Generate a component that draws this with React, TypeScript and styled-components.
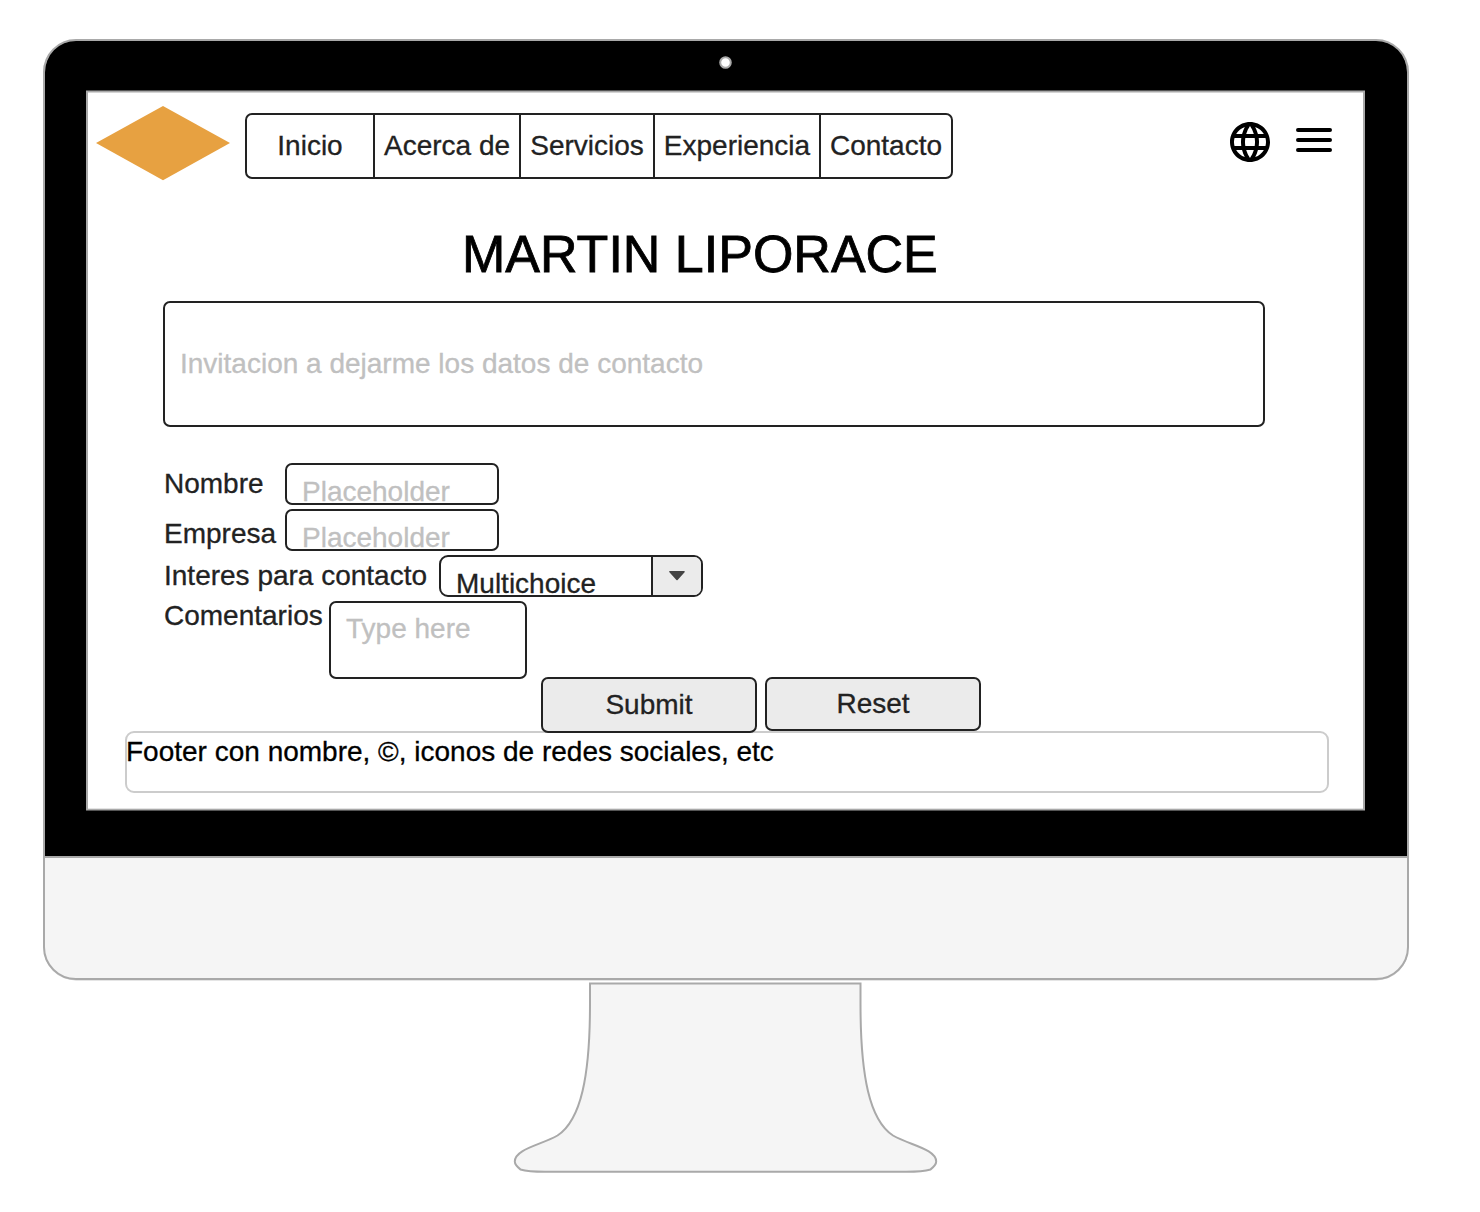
import React from 'react';
import styled, { createGlobalStyle } from 'styled-components';
import { MdLanguage } from 'react-icons/md';

const INK = '#222222';
const EDGE = '#a9a9a9';
const CHROME = '#f5f5f5';

const GlobalStyle = createGlobalStyle`
  * { box-sizing: border-box; }
  body {
    margin: 0;
    background: #ffffff;
    font-family: "Liberation Sans", Arial, Helvetica, sans-serif;
    font-size: 28px;
    line-height: 32px;
    color: ${INK};
    -webkit-text-stroke: 0.3px currentColor;
  }
`;

const Page = styled.div`
  display: flex;
  flex-direction: column;
  width: 1480px;
  height: 1212px;
  padding: 39px 0 0 43px;
  overflow: hidden;
`;

const Monitor = styled.section`
  display: flex;
  flex-direction: column;
  flex: none;
  width: 1366px;
  height: 941px;
  border: 2px solid ${EDGE};
  border-radius: 33px;
  background: ${CHROME};
  box-shadow: 0 1px 0 -0.5px #cccccc;
  overflow: hidden;
`;

const Bezel = styled.div`
  display: flex;
  flex-direction: column;
  align-items: flex-start;
  width: 100%;
  height: 817px;
  padding-left: 41px;
  background: #000000;
  border-bottom: 2px solid ${EDGE};
`;

const CameraBar = styled.div`
  display: flex;
  flex: none;
  height: 50px;
  padding: 15px 0 0 633px;
`;

const Camera = styled.svg`
  display: block;
`;

const Screen = styled.main`
  display: flex;
  flex-direction: column;
  width: 1279px;
  height: 719px;
  background: #ffffff;
  border: 2px solid ${EDGE};
  border-width: 1px 2px;
  box-shadow: 0 -1px 0 #555555, 0 1px 0 #555555, inset 0 1px 0 #d4d4d4, inset 0 -1px 0 #e4e4e4;
`;

const Header = styled.header`
  display: flex;
  align-items: flex-start;
  flex: none;
  height: 128px;
  padding: 14px 25px 0 8px;
`;

const Logo = styled.svg`
  flex: none;
  margin-right: 15px;
`;

const Nav = styled.nav`
  display: flex;
  height: 66px;
  margin-top: 7px;
  border: 2px solid ${INK};
  border-radius: 7px;
`;

const NavItem = styled.a<{ $width: number }>`
  display: flex;
  justify-content: center;
  width: ${(p) => p.$width}px;
  padding-top: 15px;
  white-space: nowrap;
  & + & { border-left: 2px solid ${INK}; }
`;

const Tools = styled.div`
  display: flex;
  gap: 16px;
  margin: 12px 0 0 auto;
  color: #000000;
`;

const MenuIcon = styled.svg`
  margin-top: -2px;
`;

const Title = styled.h1`
  flex: none;
  width: 478px;
  height: 81px;
  margin: 0 0 0 374px;
  padding-top: 4px;
  font-size: 52px;
  line-height: 60px;
  font-weight: 400;
  color: #000000;
  white-space: nowrap;
  -webkit-text-stroke: 0.8px currentColor;
`;

const Field = styled.div<{ $width: number; $height: number; $top: number; $muted?: boolean }>`
  flex: none;
  width: ${(p) => p.$width}px;
  height: ${(p) => p.$height}px;
  padding: ${(p) => p.$top}px 0 0 15px;
  border: 2px solid ${INK};
  border-radius: 7px;
  background: #ffffff;
  color: ${(p) => (p.$muted ? '#c0c0c0' : INK)};
  white-space: nowrap;
  overflow: hidden;
`;

const Intro = styled.div`
  flex: none;
  margin: 0 0 36px 75px;
`;

const Form = styled.form`
  display: flex;
  flex-direction: column;
  gap: 4px;
  flex: none;
  padding-left: 76px;
`;

const FormRow = styled.div`
  display: flex;
  align-items: flex-start;
`;

const Label = styled.label<{ $width: number; $top: number }>`
  width: ${(p) => p.$width}px;
  margin-top: ${(p) => p.$top}px;
  white-space: nowrap;
`;

const Select = styled.div`
  display: flex;
  width: 264px;
  height: 42px;
  border: 2px solid ${INK};
  border-radius: 9px;
  overflow: hidden;
`;

const SelectValue = styled.span`
  flex: 1;
  padding: 11px 0 0 15px;
`;

const SelectArrow = styled.span`
  display: flex;
  justify-content: center;
  width: 50px;
  padding-top: 13px;
  background: #ebebeb;
  border-left: 2px solid ${INK};
`;

const Actions = styled.div`
  display: flex;
  align-items: flex-start;
  gap: 8px;
  flex: none;
  height: 54px;
  margin-top: -2px;
  padding-left: 453px;
  z-index: 1;
`;

const Button = styled.button<{ $height: number }>`
  display: flex;
  justify-content: center;
  width: 216px;
  height: ${(p) => p.$height}px;
  padding: ${(p) => (p.$height - 56) / 2 + 10}px 0 0;
  border: 2px solid ${INK};
  border-radius: 7px;
  background: #ebebeb;
  color: ${INK};
  font: inherit;
  -webkit-text-stroke: inherit;
`;

const Footer = styled.footer`
  flex: none;
  width: 1204px;
  height: 62px;
  margin-left: 37px;
  padding-top: 3px;
  border: 2px solid #cccccc;
  border-radius: 9px;
  color: #000000;
  text-indent: -1px;
`;

const Stand = styled.svg`
  display: block;
  flex: none;
  margin: 1px 0 0 467px;
`;

const links = [
  { label: 'Inicio', width: 126 },
  { label: 'Acerca de', width: 146 },
  { label: 'Servicios', width: 134 },
  { label: 'Experiencia', width: 166 },
  { label: 'Contacto', width: 132 },
];

export default function App() {
  return (
    <>
      <GlobalStyle />
      <Page>
        <Monitor>
          <Bezel>
            <CameraBar>
              <Camera width="14" height="14" viewBox="0 0 14 14">
                <circle cx="6.5" cy="6.5" r="5.3" fill="#fff" stroke={EDGE} strokeWidth="2" />
              </Camera>
            </CameraBar>
            <Screen>
              <Header>
                <Logo width="134" height="75" viewBox="0 0 134 75">
                  <path d="M67 0L134 37L67 74.3L0 37Z" fill="#e7a141" />
                </Logo>
                <Nav>
                  {links.map((l) => (
                    <NavItem key={l.label} $width={l.width}>{l.label}</NavItem>
                  ))}
                </Nav>
                <Tools>
                  <MdLanguage size={48} />
                  <MenuIcon width="48" height="48" viewBox="0 0 48 48">
                    <path d="M8 14H40M8 24H40M8 34H40" stroke="#000" strokeWidth="4" strokeLinecap="round" />
                  </MenuIcon>
                </Tools>
              </Header>
              <Title>MARTIN LIPORACE</Title>
              <Intro>
                <Field $width={1102} $height={126} $top={45} $muted>
                  Invitacion a dejarme los datos de contacto
                </Field>
              </Intro>
              <Form>
                <FormRow>
                  <Label $width={121} $top={5}>Nombre</Label>
                  <Field $width={214} $height={42} $top={11} $muted>Placeholder</Field>
                </FormRow>
                <FormRow>
                  <Label $width={121} $top={9}>Empresa</Label>
                  <Field $width={214} $height={42} $top={11} $muted>Placeholder</Field>
                </FormRow>
                <FormRow>
                  <Label $width={275} $top={5}>Interes para contacto</Label>
                  <Select>
                    <SelectValue>Multichoice</SelectValue>
                    <SelectArrow>
                      <svg width="18" height="12" viewBox="0 0 18 12">
                        <path d="M2 1.7H16L9 9.4Z" fill="#444" stroke="#444" strokeWidth="1.6" strokeLinejoin="round" />
                      </svg>
                    </SelectArrow>
                  </Select>
                </FormRow>
                <FormRow>
                  <Label $width={165} $top={-1}>Comentarios</Label>
                  <Field $width={198} $height={78} $top={10} $muted>Type here</Field>
                </FormRow>
              </Form>
              <Actions>
                <Button type="button" $height={56}>Submit</Button>
                <Button type="button" $height={54}>Reset</Button>
              </Actions>
              <Footer>Footer con nombre, ©, iconos de redes sociales, etc</Footer>
            </Screen>
          </Bezel>
        </Monitor>
        <Stand width="432" height="196" viewBox="510 981 432 196">
          <path
            d="M590 983.5V1004C590 1076 581 1120 557.5 1135.500C541 1145 514.8 1149 514.8 1161.5C514.8 1165 518 1167.500 520.5 1169.500C527 1171.500 537 1171.800 545 1171.800H906C914 1171.800 924 1171.500 930.500 1169.500C933 1167.500 936.200 1165 936.200 1161.500C936.200 1149 909.500 1145 893 1135.500C869.500 1120 860.500 1076 860.500 1004V983.500Z"
            fill={CHROME}
            stroke={EDGE}
            strokeWidth="2"
          />
        </Stand>
      </Page>
    </>
  );
}
